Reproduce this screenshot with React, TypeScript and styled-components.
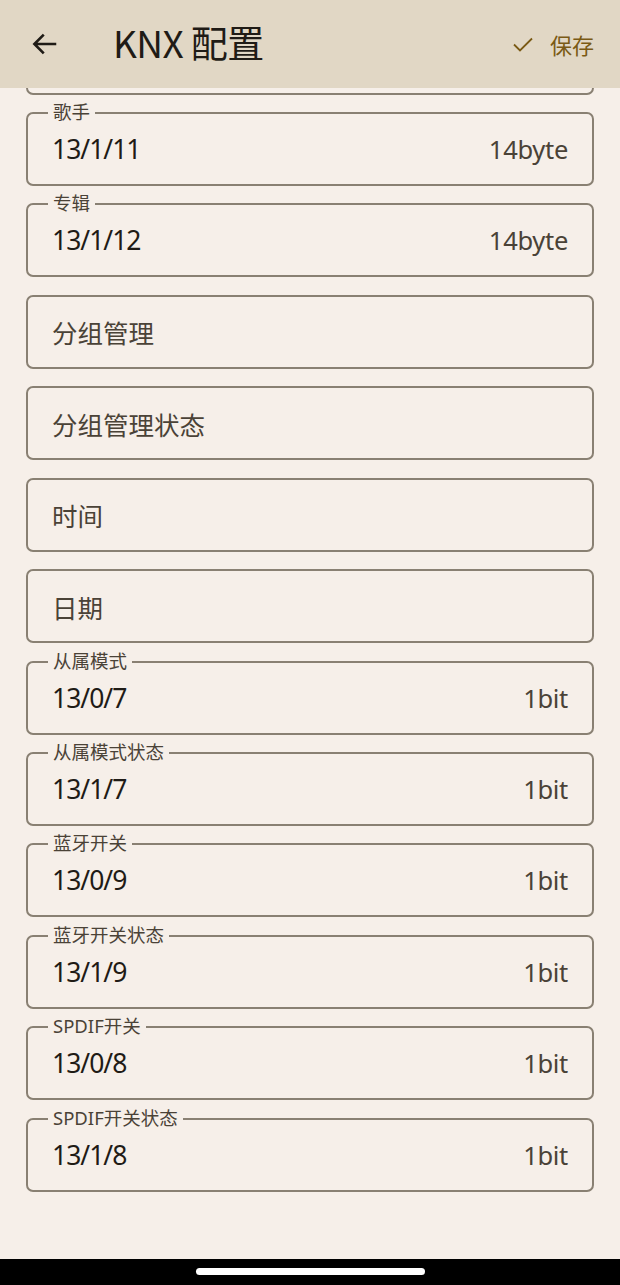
import styled, { createGlobalStyle } from "styled-components";

const GlobalStyle = createGlobalStyle`
  html, body {
    margin: 0;
    padding: 0;
    background: #f6efe9;
  }
  body {
    font-family: "Noto Sans", "Noto Sans CJK SC", sans-serif;
  }
`;

type Item = {
  label?: string;
  value?: string;
  size?: string;
  placeholder?: string;
};

// first entry is scrolled under the top bar, only its bottom edge shows
const items: Item[] = [
  {},
  { label: "歌手", value: "13/1/11", size: "14byte" },
  { label: "专辑", value: "13/1/12", size: "14byte" },
  { placeholder: "分组管理" },
  { placeholder: "分组管理状态" },
  { placeholder: "时间" },
  { placeholder: "日期" },
  { label: "从属模式", value: "13/0/7", size: "1bit" },
  { label: "从属模式状态", value: "13/1/7", size: "1bit" },
  { label: "蓝牙开关", value: "13/0/9", size: "1bit" },
  { label: "蓝牙开关状态", value: "13/1/9", size: "1bit" },
  { label: "SPDIF开关", value: "13/0/8", size: "1bit" },
  { label: "SPDIF开关状态", value: "13/1/8", size: "1bit" },
];

const Page = styled.div`
  min-height: 100vh;
  display: flex;
  flex-direction: column;
`;

const TopBar = styled.header`
  position: fixed;
  top: 0;
  left: 0;
  right: 0;
  height: 88px;
  background: #e1d7c5;
  display: flex;
  align-items: center;
  padding: 0 26px 0 25px;
  z-index: 10;
`;

const IconButton = styled.button`
  width: 40px;
  height: 40px;
  border: none;
  background: none;
  padding: 0;
  display: flex;
  align-items: center;
  justify-content: center;
  color: #1f1b16;
`;

const Title = styled.h1`
  margin: -4px 0 0 48px;
  flex: 1;
  font-family: "Noto Sans CJK SC", "Noto Sans", sans-serif;
  font-size: 37px;
  line-height: 48px;
  font-weight: 400;
  color: #1f1b16;
  letter-spacing: -0.6px;
`;

const SaveButton = styled.button`
  border: none;
  background: none;
  padding: 0;
  display: flex;
  align-items: center;
  gap: 15px;
  color: #7a5a15;
  font-family: "Noto Sans CJK SC", sans-serif;
  font-size: 22px;
`;

const List = styled.main`
  flex: 1;
  display: flex;
  flex-direction: column;
  gap: 17.45px;
  padding: 20.5px 26px 40px;
`;

const Field = styled.div`
  position: relative;
  box-sizing: border-box;
  height: 74px;
  border: 2px solid #898073;
  border-radius: 7px;
  display: flex;
  align-items: center;
  justify-content: space-between;
  padding: 0 24px;
`;

const Legend = styled.span`
  position: absolute;
  top: -14px;
  left: 20px;
  padding: 0 5px;
  background: #f6efe9;
  font-family: "Noto Sans", "Noto Sans CJK SC", sans-serif;
  font-size: 18.5px;
  line-height: 24px;
  color: #4a4237;
`;

const Value = styled.span<{ $muted?: boolean }>`
  font-size: ${(p) => (p.$muted ? "25.5px" : "26.5px")};
  letter-spacing: ${(p) => (p.$muted ? "0" : "-1px")};
  color: ${(p) => (p.$muted ? "#4a4237" : "#1f1b16")};
  font-family: ${(p) =>
    p.$muted ? '"Noto Sans CJK SC", sans-serif' : '"Noto Sans", "Noto Sans CJK SC", sans-serif'};
`;

const Size = styled.span`
  font-size: 25.5px;
  letter-spacing: -0.3px;
  color: #4a4237;
`;

const NavBar = styled.div`
  height: 26px;
  background: #000;
  display: flex;
  justify-content: center;
  padding-top: 9px;
  box-sizing: border-box;
`;

const HomePill = styled.div`
  width: 229px;
  height: 7px;
  border-radius: 4px;
  background: #fff;
`;

export default function App() {
  return (
    <Page>
      <GlobalStyle />
      <TopBar>
        <IconButton aria-label="back">
          <svg width="30" height="30" viewBox="0 0 24 24" fill="none" stroke="currentColor" strokeWidth="2.1">
            <path d="M21 12H3.5M11 4.5L3.5 12l7.5 7.5" />
          </svg>
        </IconButton>
        <Title>KNX 配置</Title>
        <SaveButton>
          <svg width="24" height="24" viewBox="0 0 24 24" fill="none" stroke="currentColor" strokeWidth="1.8">
            <path d="M3 12.5l6 6L21 6.5" />
          </svg>
          保存
        </SaveButton>
      </TopBar>

      <List>
        {items.map((it, i) => (
          <Field key={i}>
            {it.label && <Legend>{it.label}</Legend>}
            {it.placeholder && <Value $muted>{it.placeholder}</Value>}
            {it.value && (
              <>
                <Value>{it.value}</Value>
                <Size>{it.size}</Size>
              </>
            )}
          </Field>
        ))}
      </List>

      <NavBar>
        <HomePill />
      </NavBar>
    </Page>
  );
}
